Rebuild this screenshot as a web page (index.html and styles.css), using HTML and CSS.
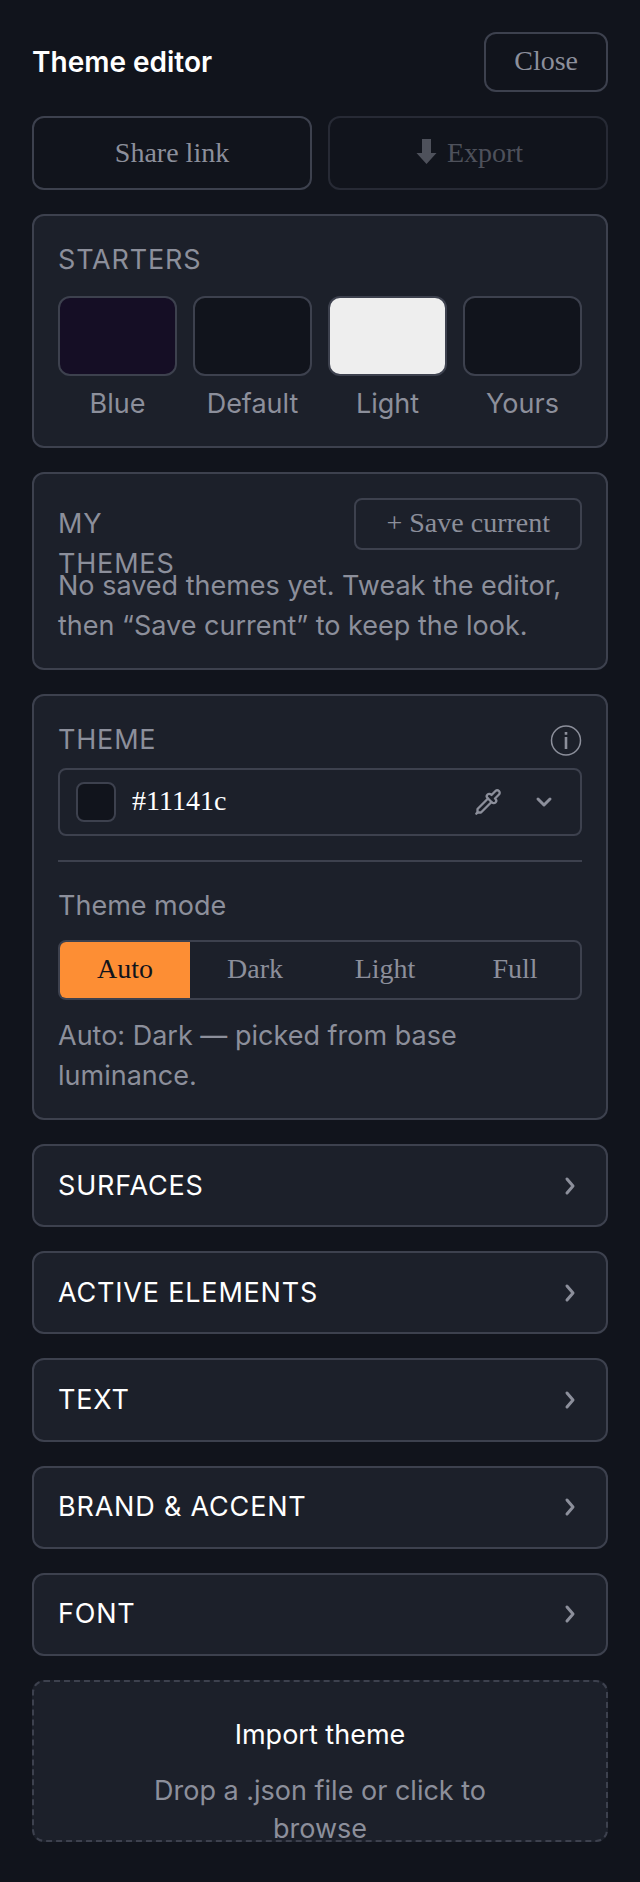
FILE: index.html
```html
<!DOCTYPE html>
<html lang="en">
<head>
<meta charset="utf-8">
<meta name="viewport" content="width=device-width, initial-scale=1">
<title>Theme editor</title>
<link rel="stylesheet" href="styles.css">
</head>
<body>
<main class="editor">
  <header class="editor-head">
    <h1 class="editor-title">Theme editor</h1>
    <button class="btn btn-close" type="button">Close</button>
  </header>

  <div class="actions">
    <button class="btn btn-action" type="button">Share link</button>
    <button class="btn btn-action" type="button" disabled>
      <svg class="icon-export" viewBox="0 0 26 28" aria-hidden="true"><path d="M9 0h9v14h5.500L13.500 25 3.500 14H9z" fill="currentColor"/></svg>
      Export
    </button>
  </div>

  <section class="card">
    <h2 class="caption">Starters</h2>
    <div class="starters">
      <button class="starter" type="button"><span class="starter-swatch swatch-blue"></span>Blue</button>
      <button class="starter" type="button"><span class="starter-swatch"></span>Default</button>
      <button class="starter" type="button"><span class="starter-swatch swatch-light"></span>Light</button>
      <button class="starter" type="button"><span class="starter-swatch"></span>Yours</button>
    </div>
  </section>

  <section class="card">
    <div class="card-head card-head-tall">
      <h2 class="caption caption-narrow">My themes</h2>
      <button class="btn btn-save" type="button">+ Save current</button>
    </div>
    <p class="note">No saved themes yet. Tweak the editor, then “Save current” to keep the look.</p>
  </section>

  <section class="card">
    <div class="card-head">
      <h2 class="caption">Theme</h2>
      <button class="icon-btn" type="button" aria-label="About theme">
        <svg class="icon-info" viewBox="0 0 32 32" aria-hidden="true"><circle cx="16" cy="16.500" r="14.500" fill="none" stroke="currentColor" stroke-width="1.500"/><path d="M14.700 13h2.600v12h-2.600zM14.700 8h2.600v2.800h-2.600z" fill="currentColor"/></svg>
      </button>
    </div>
    <div class="color-field">
      <span class="color-chip"></span>
      <input class="color-input" type="text" value="#11141c" aria-label="Theme color">
      <button class="icon-btn" type="button" aria-label="Pick color">
        <svg class="icon-pick" viewBox="0 0 24 24" fill="none" stroke="currentColor" stroke-width="2" stroke-linecap="round" stroke-linejoin="round" aria-hidden="true"><path d="m2 22 1-1h3l9-9"/><path d="M3 21v-3l9-9"/><path d="m15 6 3.400-3.400a2.100 2.100 0 1 1 3 3L18 9l.4.400a2.100 2.100 0 1 1-3 3l-3.800-3.800a2.100 2.100 0 1 1 3-3l.4.400Z"/></svg>
      </button>
      <button class="icon-btn icon-btn-toggle" type="button" aria-label="Expand">
        <svg class="icon-chevron" viewBox="0 0 24 24" aria-hidden="true"><path d="m6 9 6 6 6-6"/></svg>
      </button>
    </div>
    <hr class="divider">
    <h3 class="field-label" id="mode-label">Theme mode</h3>
    <div class="segments" role="group" aria-labelledby="mode-label">
      <button class="segment segment-on" type="button" aria-pressed="true">Auto</button>
      <button class="segment" type="button" aria-pressed="false">Dark</button>
      <button class="segment" type="button" aria-pressed="false">Light</button>
      <button class="segment" type="button" aria-pressed="false">Full</button>
    </div>
    <p class="note">Auto: Dark — picked from base luminance.</p>
  </section>

  <div class="folds">
    <button class="card fold" type="button"><span>Surfaces</span><svg class="icon-chevron" viewBox="0 0 24 24" aria-hidden="true"><path d="m9 5 6 7-6 7"/></svg></button>
    <button class="card fold" type="button"><span>Active elements</span><svg class="icon-chevron" viewBox="0 0 24 24" aria-hidden="true"><path d="m9 5 6 7-6 7"/></svg></button>
    <button class="card fold" type="button"><span>Text</span><svg class="icon-chevron" viewBox="0 0 24 24" aria-hidden="true"><path d="m9 5 6 7-6 7"/></svg></button>
    <button class="card fold" type="button"><span>Brand &amp; accent</span><svg class="icon-chevron" viewBox="0 0 24 24" aria-hidden="true"><path d="m9 5 6 7-6 7"/></svg></button>
    <button class="card fold" type="button"><span>Font</span><svg class="icon-chevron" viewBox="0 0 24 24" aria-hidden="true"><path d="m9 5 6 7-6 7"/></svg></button>
  </div>

  <button class="card drop" type="button">
    <span class="drop-title">Import theme</span>
    <span class="drop-hint">Drop a .json file or click to browse</span>
  </button>
</main>
</body>
</html>
```
FILE: styles.css
```css
:root {
  --base: #11141c;
  --surface: #1c202a;
  --line: #3d414e;
  --muted: #8c8f9b;
  --text: #ffffff;
  --accent: #fd8e34;
  --sans: Inter, "Liberation Sans", sans-serif;
  --serif: "Liberation Serif", serif;
}

* {
  box-sizing: border-box;
}

body {
  margin: 0;
  background: var(--base);
  color: var(--muted);
  font: 27px/40px var(--sans);
}

h1, h2, h3, p {
  margin: 0;
  font-size: inherit;
  font-weight: 400;
}

button, input {
  margin: 0;
  padding: 0;
  border: 0;
  background: none;
  color: inherit;
  font: inherit;
}

svg {
  display: block;
}

.editor {
  display: flex;
  flex-direction: column;
  gap: 24px;
  padding: 32px 32px 40px;
}

.editor-head,
.card-head {
  display: flex;
  align-items: center;
  justify-content: space-between;
}

.editor-title {
  color: var(--text);
  font-size: 28px;
  font-weight: 600;
}

.btn {
  border: 2px solid var(--line);
  border-radius: 12px;
  font-family: var(--serif);
  font-size: 28px;
  line-height: 32px;
}

.btn:disabled {
  opacity: 0.5;
}

.btn-close {
  padding: 11px 28px 13px;
}

.btn-action {
  display: flex;
  align-items: center;
  justify-content: center;
  gap: 8px;
  height: 74px;
}

.btn-save {
  padding: 7px 30px 9px;
  border-radius: 8px;
}

.actions {
  display: grid;
  grid-template-columns: 1fr 1fr;
  gap: 16px;
}

.card {
  padding: 24px;
  border: 2px solid var(--line);
  border-radius: 12px;
  background: var(--surface);
}

.caption {
  height: 40px;
  letter-spacing: 0.03em;
  text-transform: uppercase;
}

.caption-narrow {
  width: min-content;
}

.card-head {
  margin-bottom: 8px;
}

.card-head-tall {
  height: 52px;
  margin-bottom: 16px;
}

.note {
  margin-bottom: -2px;
}

.starters {
  display: grid;
  grid-template-columns: repeat(4, 1fr);
  gap: 16px;
  margin-top: 16px;
}

.starter {
  display: flex;
  flex-direction: column;
  align-items: center;
  gap: 10px;
  line-height: 36px;
}

.starter-swatch {
  width: 100%;
  height: 80px;
  border: 2px solid var(--line);
  border-radius: 12px;
  background: var(--base);
}

.swatch-blue {
  background: #150e25;
}

.swatch-light {
  background: #eeeeee;
}

.color-field {
  display: flex;
  align-items: center;
  height: 68px;
  padding: 0 24px 0 16px;
  border: 2px solid var(--line);
  border-radius: 8px;
}

.color-chip {
  width: 40px;
  height: 40px;
  border: 2px solid var(--line);
  border-radius: 8px;
  background: var(--base);
}

.color-input {
  flex: 1;
  min-width: 0;
  padding: 0 0 2px 16px;
  color: var(--text);
  font-family: var(--serif);
  font-size: 28px;
  line-height: 32px;
}

.icon-btn-toggle {
  margin-left: 30px;
}

.icon-export {
  width: 26px;
  height: 28px;
}

.icon-info {
  width: 32px;
  height: 32px;
}

.icon-pick {
  width: 28px;
  height: 28px;
}

.icon-chevron {
  width: 24px;
  height: 24px;
  fill: none;
  stroke: var(--muted);
  stroke-width: 3px;
  stroke-linecap: round;
  stroke-linejoin: round;
}

.divider {
  margin: 24px 0;
  border: 0;
  border-top: 2px solid var(--line);
}

.field-label {
  margin-bottom: 14px;
}

.segments {
  display: grid;
  grid-template-columns: repeat(4, 1fr);
  height: 60px;
  margin-bottom: 16px;
  overflow: hidden;
  border: 2px solid var(--line);
  border-radius: 8px;
}

.segment {
  padding-bottom: 3px;
  font-family: var(--serif);
  font-size: 28px;
  line-height: 32px;
}

.segment-on {
  background: var(--accent);
  color: var(--base);
}

.folds {
  display: grid;
  grid-auto-rows: 1fr;
  gap: 24px;
  min-height: 512px;
}

.fold {
  display: flex;
  align-items: center;
  justify-content: space-between;
  padding: 0 24px;
  color: var(--text);
  letter-spacing: 0.03em;
  text-transform: uppercase;
}

.drop {
  display: flex;
  flex-direction: column;
  align-items: center;
  gap: 18px;
  padding: 34px 32px 30px;
  border-style: dashed;
  line-height: 38px;
}

.drop-title {
  color: var(--text);
}

.drop-hint {
  max-width: 400px;
  height: 38px;
}
```
